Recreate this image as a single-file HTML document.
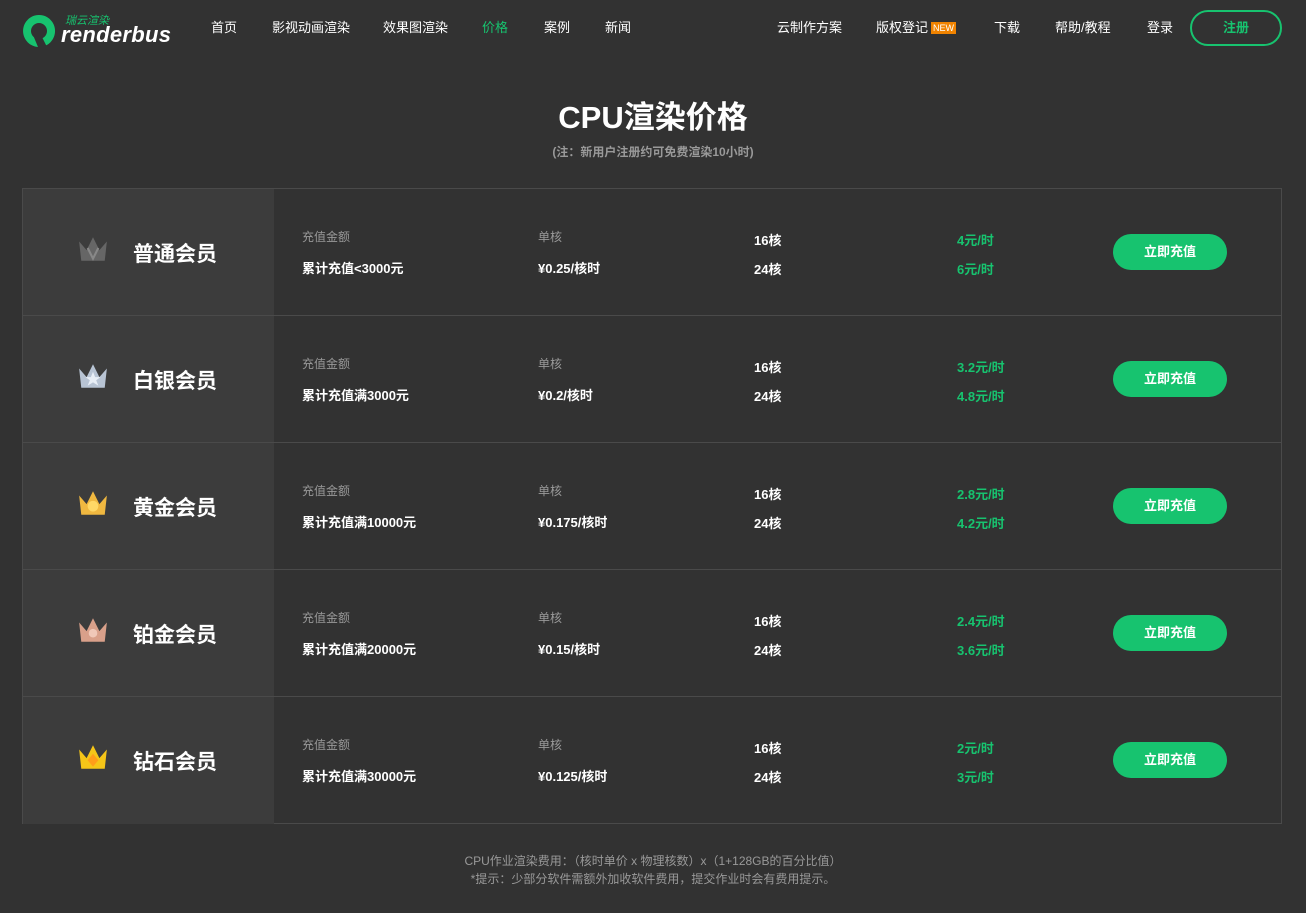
<!DOCTYPE html>
<html><head><meta charset="utf-8"><style>
*{margin:0;padding:0;box-sizing:border-box}
body{width:1306px;height:913px;background:#323232;font-family:"Liberation Sans","Noto Sans CJK SC",sans-serif;color:#fff;position:relative;overflow:hidden}
.a{position:absolute;white-space:nowrap}
.nav{font-size:13px;top:17px}
.g{color:#17c36f}
h1{position:absolute;top:92px;width:100%;text-align:center;font-size:31px;font-weight:bold}
.sub{top:143px;width:100%;text-align:center;font-size:12px;color:#999;font-weight:bold}
.tbl{position:absolute;left:22px;top:188px;width:1260px;height:636px;border:1px solid #4a4a4a}
.row{position:absolute;left:0;width:1258px;height:127px;border-bottom:1px solid #4a4a4a}
.lc{position:absolute;left:0;top:0;width:251px;height:100%;background:#3c3c3c}
.name{position:absolute;left:110px;top:49px;font-size:21px;font-weight:bold}
.lbl{font-size:12px;color:#999}
.v{font-size:13px;font-weight:bold}
.btn{position:absolute;left:1090px;top:45px;width:114px;height:36px;border-radius:18px;background:#17c36f;font-size:13px;font-weight:bold;text-align:center;line-height:36px}
.foot{font-size:12px;color:#999;width:100%;text-align:center}
</style></head><body>
<svg class="a" style="left:21px;top:13px" width="36" height="36" viewBox="0 0 36 36"><path d="M18 2a16 16 0 1 0 0.1 0Z" fill="#17c36f"/><circle cx="18" cy="18" r="8" fill="#323232"/><path d="M12 22h8l6 12h-9z" fill="#323232"/></svg>
<div class="a g" style="left:65px;top:12px;font-size:11px;font-style:italic">瑞云渲染</div>
<div class="a" style="left:61px;top:22px;font-size:22px;font-style:italic;font-weight:bold;letter-spacing:0.3px">renderbus</div>
<div class="a nav" style="left:211px">首页</div>
<div class="a nav" style="left:272px">影视动画渲染</div>
<div class="a nav" style="left:383px">效果图渲染</div>
<div class="a nav g" style="left:482px">价格</div>
<div class="a nav" style="left:544px">案例</div>
<div class="a nav" style="left:605px">新闻</div>
<div class="a nav" style="left:777px">云制作方案</div>
<div class="a nav" style="left:876px">版权登记</div>
<div class="a" style="left:931px;top:22px;background:#f08300;font-size:9px;padding:0 2px;line-height:12px;height:12px">NEW</div>
<div class="a nav" style="left:994px">下载</div>
<div class="a nav" style="left:1055px">帮助/教程</div>
<div class="a nav" style="left:1147px">登录</div>
<div class="a g" style="left:1190px;top:10px;width:92px;height:36px;border:2px solid #17c36f;border-radius:18px;text-align:center;line-height:32px;font-size:13px;font-weight:bold">注册</div>
<h1>CPU渲染价格</h1>
<div class="a sub">(注：新用户注册约可免费渲染10小时)</div>
<div class="tbl">
<div class="row" style="top:0"><div class="lc"><svg class="a" style="left:54px;top:46px" width="32" height="28" viewBox="0 0 30 26"><path d="M2 6l7 8 6-12 6 12 7-8-2 18H4z" fill="#666"/><path d="M10 12l5 10 5-10" fill="none" stroke="#888" stroke-width="2"/></svg><div class="name">普通会员</div></div>
<div class="a lbl" style="left:279px;top:39px">充值金额</div><div class="a v" style="left:279px;top:69px">累计充值&lt;3000元</div>
<div class="a lbl" style="left:515px;top:39px">单核</div><div class="a v" style="left:515px;top:69px">¥0.25/核时</div>
<div class="a v" style="left:731px;top:41px">16核</div><div class="a v" style="left:731px;top:70px">24核</div>
<div class="a v g" style="left:934px;top:41px">4元/时</div><div class="a v g" style="left:934px;top:70px">6元/时</div><div class="btn">立即充值</div></div>
<div class="row" style="top:127px"><div class="lc"><svg class="a" style="left:54px;top:46px" width="32" height="28" viewBox="0 0 30 26"><path d="M2 6l7 8 6-12 6 12 7-8-2 18H4z" fill="#b8c4d4"/><path d="M15 9l2 5h5l-4 3 2 5-5-3-5 3 2-5-4-3h5z" fill="#e8eef6"/></svg><div class="name">白银会员</div></div>
<div class="a lbl" style="left:279px;top:39px">充值金额</div><div class="a v" style="left:279px;top:69px">累计充值满3000元</div>
<div class="a lbl" style="left:515px;top:39px">单核</div><div class="a v" style="left:515px;top:69px">¥0.2/核时</div>
<div class="a v" style="left:731px;top:41px">16核</div><div class="a v" style="left:731px;top:70px">24核</div>
<div class="a v g" style="left:934px;top:41px">3.2元/时</div><div class="a v g" style="left:934px;top:70px">4.8元/时</div><div class="btn">立即充值</div></div>
<div class="row" style="top:254px"><div class="lc"><svg class="a" style="left:54px;top:46px" width="32" height="28" viewBox="0 0 30 26"><path d="M2 6l7 8 6-12 6 12 7-8-2 18H4z" fill="#f0b840"/><circle cx="15" cy="16" r="5" fill="#ffd866"/></svg><div class="name">黄金会员</div></div>
<div class="a lbl" style="left:279px;top:39px">充值金额</div><div class="a v" style="left:279px;top:69px">累计充值满10000元</div>
<div class="a lbl" style="left:515px;top:39px">单核</div><div class="a v" style="left:515px;top:69px">¥0.175/核时</div>
<div class="a v" style="left:731px;top:41px">16核</div><div class="a v" style="left:731px;top:70px">24核</div>
<div class="a v g" style="left:934px;top:41px">2.8元/时</div><div class="a v g" style="left:934px;top:70px">4.2元/时</div><div class="btn">立即充值</div></div>
<div class="row" style="top:381px"><div class="lc"><svg class="a" style="left:54px;top:46px" width="32" height="28" viewBox="0 0 30 26"><path d="M2 6l7 8 6-12 6 12 7-8-2 18H4z" fill="#d9a08a"/><circle cx="15" cy="16" r="4" fill="#f0c8b8"/></svg><div class="name">铂金会员</div></div>
<div class="a lbl" style="left:279px;top:39px">充值金额</div><div class="a v" style="left:279px;top:69px">累计充值满20000元</div>
<div class="a lbl" style="left:515px;top:39px">单核</div><div class="a v" style="left:515px;top:69px">¥0.15/核时</div>
<div class="a v" style="left:731px;top:41px">16核</div><div class="a v" style="left:731px;top:70px">24核</div>
<div class="a v g" style="left:934px;top:41px">2.4元/时</div><div class="a v g" style="left:934px;top:70px">3.6元/时</div><div class="btn">立即充值</div></div>
<div class="row" style="top:508px;border-bottom:none"><div class="lc"><svg class="a" style="left:54px;top:46px" width="32" height="28" viewBox="0 0 30 26"><path d="M2 6l7 8 6-12 6 12 7-8-2 18H4z" fill="#f5c518"/><path d="M15 10l5 6-5 6-5-6z" fill="#ff9d1a"/></svg><div class="name">钻石会员</div></div>
<div class="a lbl" style="left:279px;top:39px">充值金额</div><div class="a v" style="left:279px;top:69px">累计充值满30000元</div>
<div class="a lbl" style="left:515px;top:39px">单核</div><div class="a v" style="left:515px;top:69px">¥0.125/核时</div>
<div class="a v" style="left:731px;top:41px">16核</div><div class="a v" style="left:731px;top:70px">24核</div>
<div class="a v g" style="left:934px;top:41px">2元/时</div><div class="a v g" style="left:934px;top:70px">3元/时</div><div class="btn">立即充值</div></div>
</div>
<div class="a foot" style="top:852px">CPU作业渲染费用：（核时单价 x 物理核数）x（1+128GB的百分比值）</div>
<div class="a foot" style="top:870px">*提示：少部分软件需额外加收软件费用，提交作业时会有费用提示。</div>
</body></html>
